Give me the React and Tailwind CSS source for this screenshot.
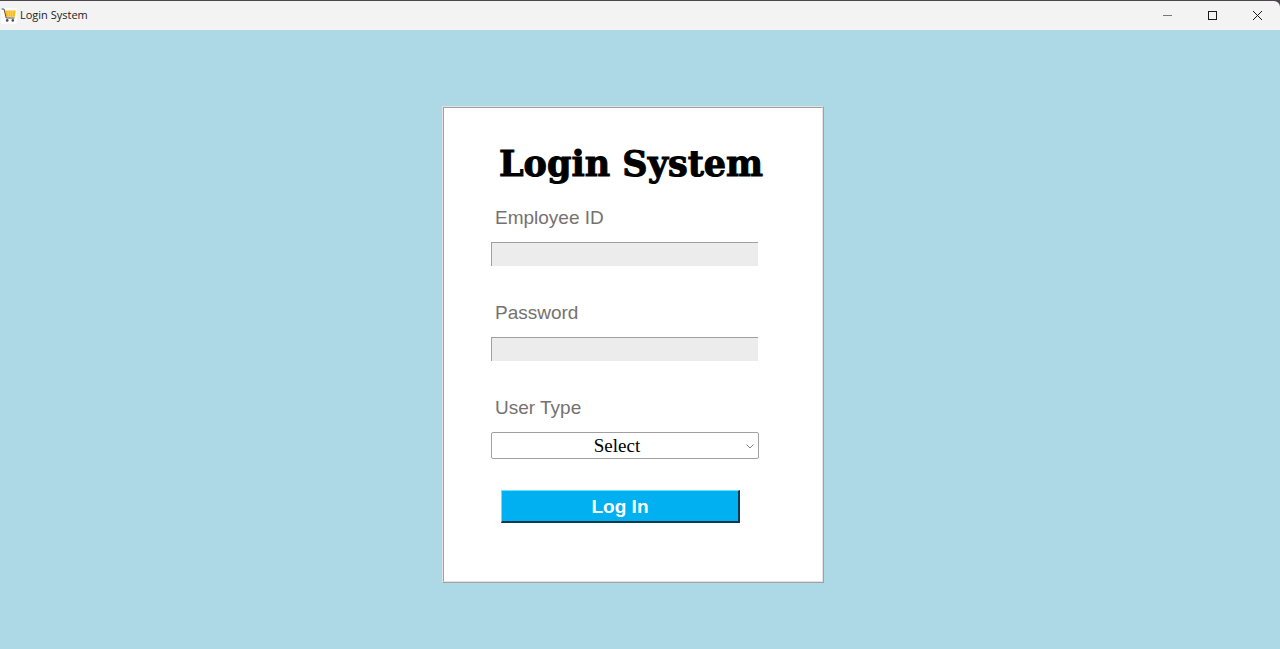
import React from "react";

function CartIcon() {
  return (
    <svg viewBox="0 0 16 16" className="h-4 w-4 shrink-0" aria-hidden="true">
      <rect width="16" height="16" fill="#fff" />
      <path d="M4 2.4H14.8L13.8 8.8H5.2Z" fill="#fbbc14" />
      <path d="M7 3L7.4 7.8M9.3 3V7.8M11.8 3L11.6 7.8" stroke="#fde08a" strokeWidth="0.6" />
      <path d="M0.6 1H3L5.2 10H13.6" fill="none" stroke="#4b4a4c" strokeWidth="1" />
      <circle cx="6.2" cy="12.4" r="1.3" fill="#4b4a4c" />
      <circle cx="11.8" cy="12.4" r="1.3" fill="#4b4a4c" />
    </svg>
  );
}

function WindowButton({ label, children }) {
  return (
    <button type="button" aria-label={label} className="flex h-full w-[45px] items-center justify-center">
      <svg viewBox="0 0 11 11" className="h-[11px] w-[11px]" fill="none" stroke="#1a1a1a">
        {children}
      </svg>
    </button>
  );
}

function TitleBar() {
  return (
    <header className="bg-[#4a464b]">
      <div className="mt-px flex h-[29px] items-center overflow-hidden rounded-tr-md bg-[#f3f3f3] pl-px">
        <CartIcon />
        <span className="ml-[3px] font-['Open_Sans',sans-serif] text-[11px] text-[#1b1b1b]">Login System</span>
        <div className="ml-auto flex h-full">
          <WindowButton label="Minimize">
            <path d="M1 5.5H10" stroke="#777" />
          </WindowButton>
          <WindowButton label="Maximize">
            <rect x="1.5" y="1.5" width="8" height="8" />
          </WindowButton>
          <WindowButton label="Close">
            <path d="M1 1L10 10M10 1L1 10" />
          </WindowButton>
        </div>
      </div>
    </header>
  );
}

function Field({ id, label, type }) {
  return (
    <div className="mb-[35px]">
      <label htmlFor={id} className="mb-3 block pl-1 text-[19px] leading-6 text-[#767171]">
        {label}
      </label>
      <input
        id={id}
        type={type}
        className="block h-6 w-[267px] border-t border-l border-[#a0a0a0] bg-[#ececec] px-1 outline-none"
      />
    </div>
  );
}

export default function App() {
  return (
    <div className="flex min-h-screen flex-col bg-[#add8e6] font-['Liberation_Sans',sans-serif]">
      <TitleBar />
      <main className="flex flex-1 items-start justify-center pt-[76px] pr-[14px] pb-8">
        <form
          className="w-[382px] border border-t-[#e3e3e3] border-r-[#a0a0a0] border-b-[#a0a0a0] border-l-[#e3e3e3]"
          onSubmit={(e) => e.preventDefault()}
        >
          <div className="border border-t-[#a0a0a0] border-r-[#e3e3e3] border-b-[#e3e3e3] border-l-[#a0a0a0] bg-white pb-[58px] pl-[47px]">
            <h1 className="pt-8 pl-2 font-['DejaVu_Serif',serif] text-[35px] leading-[48px] font-bold whitespace-nowrap text-black [-webkit-text-stroke:1px_black]">
              Login System
            </h1>
            <div className="pt-[18px]">
              <Field id="employee" label="Employee ID" type="text" />
              <Field id="password" label="Password" type="password" />
              <label htmlFor="usertype" className="mb-3 block pl-1 text-[19px] leading-6 text-[#767171]">
                User Type
              </label>
              <div className="relative w-[268px]">
                <select
                  id="usertype"
                  className="block h-[27px] w-full appearance-none rounded-xs border border-[#a0a0a0] bg-white pr-4 text-center font-['Liberation_Serif',serif] text-[19px] leading-6 text-black [text-align-last:center]"
                >
                  <option>Select</option>
                  <option>Admin</option>
                  <option>Employee</option>
                </select>
                <svg
                  viewBox="0 0 8 5"
                  className="pointer-events-none absolute top-3 right-[5px] h-[5px] w-2"
                  fill="none"
                  stroke="#808080"
                >
                  <path d="M0.5 0.5L4 4L7.5 0.5" />
                </svg>
              </div>
            </div>
            <button
              type="submit"
              className="mt-[31px] ml-[10px] flex h-[33px] w-[239px] items-center justify-center border-t border-r-2 border-b-2 border-l border-t-[#6fe0fb] border-r-[#0b3a4d] border-b-[#0b3a4d] border-l-[#6fe0fb] bg-[#00b0f0] pt-0.5 text-[19px] font-bold text-white"
            >
              Log In
            </button>
          </div>
        </form>
      </main>
    </div>
  );
}
